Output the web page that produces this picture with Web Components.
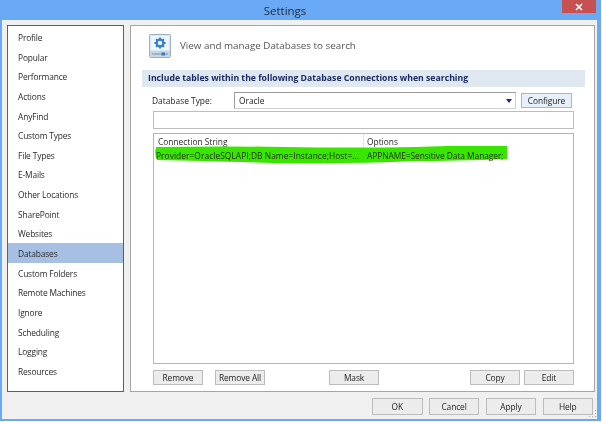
<!DOCTYPE html>
<html>
<head>
<meta charset="utf-8">
<title>Settings</title>
<style>
  html, body { margin: 0; padding: 0; background: #fff; }
  body { font-family: "Open Sans", sans-serif; color: #222; }
</style>
</head>
<body>
<settings-window title-text="Settings">
  <nav-list slot="nav" selected="Databases"
    items="Profile,Popular,Performance,Actions,AnyFind,Custom Types,File Types,E-Mails,Other Locations,SharePoint,Websites,Databases,Custom Folders,Remote Machines,Ignore,Scheduling,Logging,Resources"></nav-list>
  <database-panel slot="panel"></database-panel>
  <ui-button slot="footer" w="50.5">OK</ui-button>
  <ui-button slot="footer" w="50.5">Cancel</ui-button>
  <ui-button slot="footer" w="50.5">Apply</ui-button>
  <ui-button slot="footer" w="50.5">Help</ui-button>
</settings-window>

<script>
class UiButton extends HTMLElement {
  constructor() {
    super();
    this.attachShadow({mode: 'open'});
  }
  connectedCallback() {
    const w = this.getAttribute('w') || 50;
    this.shadowRoot.innerHTML = `
      <style>
        :host {
          display: flex;
          align-items: center;
          justify-content: center;
          box-sizing: border-box;
          width: ${w}px;
          height: var(--btn-height, 15px);
          background: #ececec;
          border: 1px solid #bcbcbc;
          font-size: 8.4px;
          letter-spacing: -.1px;
          color: #222;
        }
        :host([accent]) {
          background: #e8f1fb;
          border-color: #8fbce8;
        }
      </style>
      <slot></slot>`;
  }
}
customElements.define('ui-button', UiButton);

class NavList extends HTMLElement {
  constructor() {
    super();
    this.attachShadow({mode: 'open'});
  }
  connectedCallback() {
    const selected = this.getAttribute('selected');
    const rows = this.getAttribute('items').split(',').map(name =>
      `<div class="row ${name === selected ? 'on' : ''}">${name}</div>`).join('');
    this.shadowRoot.innerHTML = `
      <style>
        :host {
          display: block;
          box-sizing: border-box;
          height: 100%;
          background: #fff;
          border: 1px solid #5f5f5f;
          padding-top: 1px;
        }
        .row {
          height: 19.65px;
          line-height: 21px;
          padding-left: 10px;
          font-size: 8.4px;
          letter-spacing: -.15px;
          color: #2a2a2a;
        }
        .on { background: #a6bfe3; }
      </style>
      ${rows}`;
  }
}
customElements.define('nav-list', NavList);

class DatabasePanel extends HTMLElement {
  constructor() {
    super();
    this.attachShadow({mode: 'open'});
  }
  connectedCallback() {
    this.shadowRoot.innerHTML = `
      <style>
        :host {
          display: flex;
          flex-direction: column;
          box-sizing: border-box;
          height: 100%;
          background: #fff;
          border: 1px solid #a5a5a5;
          padding: 7px 9px 6px 11px;
        }
        .head {
          display: flex;
          align-items: center;
          gap: 9px;
          height: 25px;
          padding-left: 7px;
          font-size: 9.8px;
          color: #555;
        }
        .section {
          margin-top: 12px;
          height: 17px;
          line-height: 17px;
          padding-left: 6px;
          background: #dfe8f0;
          font-size: 8.7px;
          font-weight: 700;
          color: #1b2a66;
        }
        .indent {
          display: flex;
          flex-direction: column;
          flex: 1;
          margin: 0 11px;
        }
        .type-row {
          display: flex;
          align-items: center;
          height: 17px;
          margin-top: 5px;
          font-size: 8.4px;
          color: #222;
        }
        .type-row label { width: 82px; margin-left: -1px; }
        .combo {
          display: flex;
          align-items: center;
          justify-content: space-between;
          box-sizing: border-box;
          width: 282px;
          height: 17px;
          margin-right: 5px;
          padding: 0 3px 0 4px;
          border: 1px solid #9a9a9a;
          border-right-color: #cfcfcf;
          border-bottom-color: #cfcfcf;
        }
        .combo svg { display: block; }
        .filter {
          box-sizing: border-box;
          height: 18px;
          margin-top: 2px;
          border: 1px solid #bdbdbd;
        }
        .table {
          position: relative;
          flex: 1;
          box-sizing: border-box;
          margin-top: 4px;
          border: 1px solid #b4b4b4;
          font-size: 8.4px;
        }
        .cols {
          display: grid;
          grid-template-columns: 209px 1fr;
          height: 14px;
          line-height: 16px;
          color: #2a2a2a;
        }
        .cols div { padding-left: 4px; }
        .cols div + div { border-left: 1px solid #e4e4e4; padding-left: 3px; }
        .cols.data {
          position: relative;
          height: 15px;
          line-height: 15px;
          color: #24330c;
        }
        .cols.data div { border-left: 0; padding-left: 2px; white-space: nowrap; overflow: hidden; }
        .cols.data div:first-child { letter-spacing: .06px; }
        .cols.data div + div { padding-left: 4px; letter-spacing: -.05px; }
        .mark {
          position: absolute;
          left: 0;
          top: 12px;
          width: 353px;
          height: 18px;
        }
        .actions {
          display: flex;
          margin-top: 6px;
          --btn-height: 15px;
        }
      </style>
      <div class="head">
        <svg width="22" height="24" viewBox="0 0 22 24">
          <rect x=".5" y=".5" width="21" height="23" rx="1" fill="#dbe7f4" stroke="#9db0c4"/>
          <rect x="2" y="2" width="18" height="14" fill="#eef5fc"/>
          <path d="M1 17h20v6H1z" fill="#c8d5e2"/>
          <path d="M3 20h16" stroke="#7f95ab"/>
          <rect x="12.500" y="18.500" width="3.500" height="3" fill="#2f7fd0"/>
          <g fill="none" stroke="#2f7fd0">
            <circle cx="11" cy="9" r="3.400" stroke-width="2.200"/>
            <path stroke-width="1.900" d="M11 3.500v1.700M11 12.800v1.700M5.500 9h1.700M14.800 9h1.700M7.100 5.100l1.200 1.200M13.700 11.700l1.200 1.200M7.100 12.900l1.200-1.200M13.700 6.300l1.200-1.200"/>
          </g>
        </svg>
        <span>View and manage Databases to search</span>
      </div>
      <div class="section">Include tables within the following Database Connections when searching</div>
      <div class="indent">
        <div class="type-row">
          <label>Database Type:</label>
          <div class="combo">
            <span>Oracle</span>
            <svg width="6" height="4" viewBox="0 0 6 4"><path d="M0 0h6L3 4z" fill="#1b2a66"/></svg>
          </div>
          <ui-button w="51" accent>Configure</ui-button>
        </div>
        <div class="filter"></div>
        <div class="table">
          <div class="cols"><div>Connection String</div><div>Options</div></div>
          <svg class="mark" viewBox="0 0 353 18" preserveAspectRatio="none">
            <path d="M2 1 Q70 0 130 1 Q200 2 262 1 Q310 -1 353 0 L353 13 Q300 15 262 15 Q200 18 120 17 Q50 15 3 14 Q0 8 2 1z" fill="#39e600"/>
          </svg>
          <div class="cols data">
            <div>Provider=OracleSQLAPI;DB Name=Instance;Host=...</div>
            <div>APPNAME=Sensitive Data Manager;</div>
          </div>
        </div>
        <div class="actions">
          <ui-button w="50">Remove</ui-button>
          <ui-button w="50" style="margin-left:12px">Remove All</ui-button>
          <ui-button w="50" style="margin-left:64px">Mask</ui-button>
          <ui-button w="50" style="margin-left:auto">Copy</ui-button>
          <ui-button w="50" style="margin-left:4px">Edit</ui-button>
        </div>
      </div>`;
  }
}
customElements.define('database-panel', DatabasePanel);

class SettingsWindow extends HTMLElement {
  constructor() {
    super();
    this.attachShadow({mode: 'open'});
  }
  connectedCallback() {
    this.shadowRoot.innerHTML = `
      <style>
        :host {
          display: flex;
          flex-direction: column;
          box-sizing: border-box;
          width: 601px;
          height: 421px;
          background: #6aa9f5;
          padding: 0 4px 2px 2px;
          filter: blur(.3px);
        }
        .titlebar {
          position: relative;
          height: 20px;
          flex: none;
          line-height: 22px;
          text-align: center;
          font-size: 11.5px;
          color: #1f2b3a;
          padding-right: 29px;
        }
        .close {
          position: absolute;
          top: 0;
          right: 1px;
          width: 34px;
          height: 13px;
          background: #c75050;
          display: flex;
          align-items: center;
          justify-content: center;
        }
        .close svg { display: block; }
        .body {
          position: relative;
          flex: 1;
          display: flex;
          flex-direction: column;
          background: #f0f0f0;
          padding: 5px 2px 5px 5px;
          min-height: 0;
        }
        .main {
          display: flex;
          gap: 6px;
          height: 367px;
          flex: none;
        }
        .nav { width: 117px; flex: none; }
        .panel { flex: 1; min-width: 0; }
        .footer {
          display: flex;
          justify-content: flex-end;
          gap: 6.33px;
          margin-top: 6px;
          padding-right: 2px;
          --btn-height: 17px;
        }
        .grip {
          position: absolute;
          right: 0;
          bottom: 0;
        }
      </style>
      <div class="titlebar">
        ${this.getAttribute('title-text')}
        <div class="close">
          <svg width="8" height="8" viewBox="0 0 8 8"><path d="M1 1l6 6M7 1L1 7" stroke="#fff" stroke-width="1.600"/></svg>
        </div>
      </div>
      <div class="body">
        <div class="main">
          <div class="nav"><slot name="nav"></slot></div>
          <div class="panel"><slot name="panel"></slot></div>
        </div>
        <div class="footer"><slot name="footer"></slot></div>
        <svg class="grip" width="9" height="9" viewBox="0 0 9 9" fill="#a8a8a8">
          <rect x="7" y="0" width="1" height="1"/><rect x="7" y="3" width="1" height="1"/><rect x="7" y="6" width="1" height="1"/>
          <rect x="4" y="3" width="1" height="1"/><rect x="4" y="6" width="1" height="1"/><rect x="1" y="6" width="1" height="1"/>
        </svg>
      </div>`;
  }
}
customElements.define('settings-window', SettingsWindow);
</script>
</body>
</html>
